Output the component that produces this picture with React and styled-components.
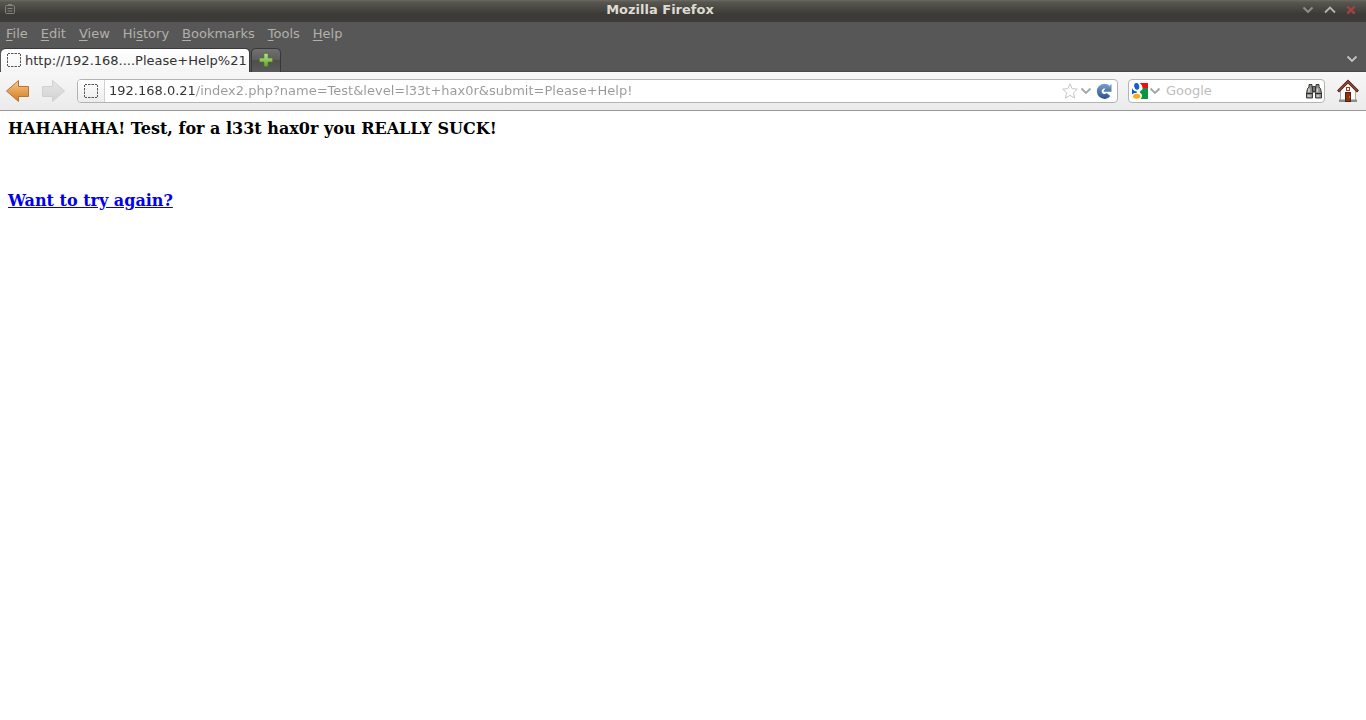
import React, { useState } from 'react';
import styled, { createGlobalStyle } from 'styled-components';

const menus = [
    { before: '', key: 'F', after: 'ile' },
    { before: '', key: 'E', after: 'dit' },
    { before: '', key: 'V', after: 'iew' },
    { before: 'Hi', key: 's', after: 'tory' },
    { before: '', key: 'B', after: 'ookmarks' },
    { before: '', key: 'T', after: 'ools' },
    { before: '', key: 'H', after: 'elp' },
];

const Chevron = ({ up }) => (
    <svg width='12' height='8' viewBox='0 0 12 8' fill='none' stroke='currentColor' strokeWidth='1.8'>
        <path d={up ? 'M1 6.5L6 1.5L11 6.5' : 'M1.5 1.5L6 6L10.5 1.5'} />
    </svg>
)

const WindowIcon = () => (
    <svg width='12' height='12' viewBox='0 0 12 12' fill='none' stroke='#85847d'>
        <rect x='1.5' y='1.5' width='9' height='8' rx='1' />
        <path d='M4 .5h4M3.5 4.5h5M3.5 7h5' />
    </svg>
)

const CloseIcon = () => (
    <svg width='10' height='10' viewBox='0 0 10 10' fill='none' stroke='#a04343' strokeWidth='2.4'>
        <path d='M1.3 1.3L8.7 8.7M8.7 1.3L1.3 8.7' />
    </svg>
)

const BlankPageIcon = () => (
    <svg width='14' height='14' viewBox='0 0 14 14' fill='none' stroke='#555'>
        <path d='M1 .5h2M4 .5h2.500M7.500 .5h2.500M11 .5h2M1 13.5h2M4 13.5h2.500M7.500 13.5h2.500M11 13.5h2' />
        <path d='M.5 1v2M.5 4v2.500M.5 7.500v2.500M.5 11v2M13.5 1v2M13.5 4v2.500M13.5 7.500v2.500M13.5 11v2' />
    </svg>
)

const PlusIcon = () => (
    <svg width='16' height='16' viewBox='0 0 16 16'>
        <defs>
            <linearGradient id='plus' x1='0' y1='0' x2='0' y2='1'>
                <stop offset='0' stopColor='#c0e38a' />
                <stop offset='1' stopColor='#5fa528' />
            </linearGradient>
        </defs>
        <path d='M6 1.5h4V6h4.5v4H10v4.5H6V10H1.5V6H6z' fill='url(#plus)' stroke='#4e7a35' strokeOpacity='.6' />
    </svg>
)

const ArrowIcon = ({ forward }) => (
    <svg width='24' height='24' viewBox='0 0 24 24'>
        <defs>
            <linearGradient id={forward ? 'next' : 'prev'} x1='0' y1='0' x2='0' y2='1'>
                <stop offset='0' stopColor={forward ? '#e6e6e6' : '#fbc98c'} />
                <stop offset='1' stopColor={forward ? '#d2d2d2' : '#d07a1c'} />
            </linearGradient>
        </defs>
        <path
            d={forward ? 'M10.5 1.5L22.5 12L10.5 22.5V17.5H.5V7.500H10.5z' : 'M12.5 1.5L.5 12L12.5 22.5V17.5H22.5V7.500H12.5z'}
            fill={forward ? 'url(#next)' : 'url(#prev)'}
            stroke={forward ? '#d0d0d0' : '#b4733a'}
            strokeLinejoin='round'
        />
    </svg>
)

const StarIcon = () => (
    <svg width='16' height='16' viewBox='0 0 16 16'>
        <path
            d='M8 .8L10.1 5.6L15.3 6.2L11.5 9.700L12.5 15L8 12.4L3.5 15L4.5 9.700L.7 6.2L5.9 5.6z'
            fill='#fff' stroke='#c4c4c4' strokeLinejoin='round'
        />
    </svg>
)

const ReloadIcon = () => (
    <svg width='16' height='16' viewBox='0 0 16 16'>
        <defs>
            <linearGradient id='reload' gradientUnits='userSpaceOnUse' x1='0' y1='0' x2='0' y2='16'>
                <stop offset='0' stopColor='#7aa3d0' />
                <stop offset='1' stopColor='#2a5488' />
            </linearGradient>
        </defs>
        <path d='M12 4.500A5.200 5.200 0 1 0 12.500 11.600' fill='none' stroke='url(#reload)' strokeWidth='4.800' />
        <path d='M15.5 1V8.800H7.800V7.500L10 5L13 3.600z' fill='url(#reload)' />
    </svg>
)

const GoogleIcon = () => (
    <svg width='16' height='16' viewBox='0 0 16 16'>
        <rect width='16' height='16' fill='#fff' />
        <path d='M7.500 0H16V5H10.500C10.500 3 9.5 1.200 7.500 0z' fill='#f20d0d' />
        <path d='M10.5 5H16V16H8.500C10.500 14 10.500 11.5 8.500 10C7.500 9.200 7.600 8.600 8.500 8C10 7.200 10.800 6.200 10.500 5z' fill='#0b9444' />
        <path d='M0 5C1 7.500 2.500 8.300 4.500 8.300L4.800 10.100C2.800 10.100 1.200 10.600 0 11.500z' fill='#1a55b8' />
        <ellipse cx='4.700' cy='3.300' rx='2.500' ry='3.400' transform='rotate(-12 4.700 3.300)' fill='#1461cc' />
        <ellipse cx='4.700' cy='13.300' rx='3.600' ry='2.500' fill='#f2b018' />
    </svg>
)

const BinocularsIcon = () => (
    <svg width='16' height='16' viewBox='0 0 16 16' stroke='#2c2c2c' strokeWidth='.9'>
        <path d='M3 1.5H6V4L7 5.500V10H6.500V15H.5V10L1.5 5.500L3 4z' fill='#8b8f87' />
        <path d='M10 1.500H13V4L14.500 5.500L15.500 10V15H9.500V10H9V5.500L10 4z' fill='#8b8f87' />
        <path d='M6.500 3.500h3v5h-3z' fill='#777' />
        <path d='M.5 10.500h6M9.500 10.500h6' strokeWidth='1.200' />
        <path d='M3 5.500v3.500M11.500 5.500v3.500M1.500 13h3M10.500 13h3' stroke='#d4d5ce' strokeWidth='1.500' />
    </svg>
)

const HomeIcon = () => (
    <svg width='22' height='24' viewBox='0 0 22 24'>
        <path d='M3.500 10.500L11 3.500L18.500 10.500V21.500H3.500z' fill='#fafafa' stroke='#aaa' />
        <path d='M2 20.500h18v2.500H2z' fill='#8b8f86' />
        <path d='M1 12.500L11 2.500L21 12.500' fill='none' stroke='#42231c' strokeWidth='3' />
        <path d='M1.500 12L11 2.800L20.500 12' fill='none' stroke='#a8482f' strokeWidth='1.100' />
        <rect x='9.5' y='8.5' width='3' height='3' fill='#fff' stroke='#9b3a18' />
        <rect x='8.5' y='13.5' width='5' height='9' fill='#93300c' stroke='#51200f' />
        <path d='M12 18h1' stroke='#edc26f' />
    </svg>
)

const App = () => {

    const [ url, setUrl ] = useState('192.168.0.21/index2.php?name=Test&level=l33t+hax0r&submit=Please+Help!');
    const [ search, setSearch ] = useState('');

    return (
        <>
            <GlobalStyle />
            <TitleBar>
                <TitleLeft><WindowIcon /></TitleLeft>
                <Title>Mozilla Firefox</Title>
                <TitleRight>
                    <IconButton $color='#92918c' aria-label='Minimize'><Chevron /></IconButton>
                    <IconButton $color='#b5b4af' aria-label='Maximize'><Chevron up /></IconButton>
                    <IconButton aria-label='Close'><CloseIcon /></IconButton>
                </TitleRight>
            </TitleBar>
            <MenuBar>
                {menus.map((menu) => (
                    <MenuButton key={menu.before + menu.key + menu.after}>
                        {menu.before}<u>{menu.key}</u>{menu.after}
                    </MenuButton>
                ))}
            </MenuBar>
            <TabBar>
                <Tab>
                    <BlankPageIcon />
                    <span>http://192.168....Please+Help%21</span>
                </Tab>
                <NewTab aria-label='Open a new tab'><PlusIcon /></NewTab>
                <TabsEnd>
                    <IconButton $color='#c4c4c4' aria-label='List all tabs'><Chevron /></IconButton>
                </TabsEnd>
            </TabBar>
            <ToolBar>
                <NavButtons>
                    <IconButton aria-label='Back'><ArrowIcon /></IconButton>
                    <IconButton aria-label='Forward'><ArrowIcon forward /></IconButton>
                </NavButtons>
                <UrlBox>
                    <Identity><BlankPageIcon /></Identity>
                    <UrlInput aria-label='Address' value={url} onChange={(e) => setUrl(e.target.value)} />
                    <UrlActions>
                        <IconButton aria-label='Bookmark this page'><StarIcon /></IconButton>
                        <IconButton $color='#a5a5a5' aria-label='Show history'><Chevron /></IconButton>
                        <ReloadButton aria-label='Reload'><ReloadIcon /></ReloadButton>
                    </UrlActions>
                </UrlBox>
                <SearchBox>
                    <EngineButton aria-label='Search engine'><GoogleIcon /><Chevron /></EngineButton>
                    <SearchInput
                        aria-label='Search'
                        placeholder='Google'
                        value={search}
                        onChange={(e) => setSearch(e.target.value)}
                    />
                    <IconButton aria-label='Search'><BinocularsIcon /></IconButton>
                </SearchBox>
                <HomeButton aria-label='Home'><HomeIcon /></HomeButton>
            </ToolBar>
            <Page>
                <Message>HAHAHAHA! Test, for a l33t hax0r you REALLY SUCK!</Message>
                <Again href='#again'>Want to try again?</Again>
            </Page>
        </>
    )
}

export default App;


const GlobalStyle = createGlobalStyle`
    * {
        box-sizing:border-box;
    }
    body {
        margin:0;
        background:#fff;
        font-family:'DejaVu Sans', sans-serif;
        font-size:13px;
    }
    button, input {
        margin:0;
        padding:0;
        border:0;
        background:none;
        font:inherit;
        outline:none;
    }
    svg {
        display:block;
        flex:none;
    }
`

const TitleBar = styled.header`
    height:22px;
    display:flex;
    align-items:center;
    background:linear-gradient(#6b6a64 0, #57564f 2px, #3c3b37 14px, #3c3b37);
`

const TitleLeft = styled.div`
    width:20px;
    padding:0 0 2px 4px;
`

const Title = styled.h1`
    flex:1;
    margin:0;
    padding-bottom:2px;
    text-align:center;
    font-size:13px;
    line-height:20px;
    color:#dfdbd2;
`

const TitleRight = styled.div`
    width:66px;
    display:flex;
    align-items:center;
    gap:10px;
    padding:0 0 2px 2px;
`

const IconButton = styled.button`
    display:flex;
    align-items:center;
    color:${props => props.$color || '#333'};
`

const MenuBar = styled.nav`
    height:24px;
    display:flex;
    align-items:center;
    gap:13px;
    padding:0 6px;
    background:#575757;
`

const MenuButton = styled.button`
    color:#b3b0aa;
    line-height:20px;

    u {
        text-underline-offset:2px;
    }
`

const TabBar = styled.div`
    height:26px;
    display:flex;
    align-items:flex-end;
    gap:1px;
    padding-left:1px;
    background:linear-gradient(#575757 24px, #454545);
`

const Tab = styled.div`
    height:24px;
    width:249px;
    display:flex;
    align-items:center;
    gap:4px;
    padding:0 0 1px 6px;
    border:1px solid #3a3a3a;
    border-width:1px 1px 0 0;
    border-radius:5px 5px 0 0;
    background:linear-gradient(#fff, #f5f5f5);
    color:#333;
    white-space:nowrap;
`

const NewTab = styled.button`
    width:30px;
    height:24px;
    display:flex;
    align-items:center;
    justify-content:center;
    padding-bottom:2px;
    border:1px solid #383838;
    border-bottom:0;
    border-radius:5px 5px 0 0;
    background:linear-gradient(#707070, #5c5c5c 50%, #4f4f4f 50%, #5a5a5a);
`

const TabsEnd = styled.div`
    flex:1;
    display:flex;
    justify-content:flex-end;
    padding:0 8px 9px 0;
`

const ToolBar = styled.div`
    height:39px;
    display:flex;
    align-items:center;
    gap:10px;
    padding:0 7px 1px 6px;
    border-bottom:1px solid #979797;
    background:linear-gradient(#f7f7f7, #ebebeb);
`

const NavButtons = styled.div`
    display:flex;
    gap:12px;
    padding-right:1px;
`

const UrlBox = styled.div`
    flex:1;
    height:24px;
    display:flex;
    align-items:stretch;
    border:1px solid #b3b3b3;
    border-radius:4px;
    background:#fff;
    overflow:hidden;
`

const Identity = styled.div`
    width:27px;
    display:flex;
    align-items:center;
    justify-content:center;
    border-right:1px solid #d0d0d0;
    background:linear-gradient(#fff, #ececec);
`

// the host part of the address is dark, the rest is grey
const UrlInput = styled.input`
    flex:1;
    min-width:0;
    padding-left:4px;
    background:linear-gradient(90deg, #333 91px, #999 91px);
    background-clip:text;
    -webkit-background-clip:text;
    color:transparent;
    caret-color:#333;
`

const UrlActions = styled.div`
    display:flex;
    align-items:center;
    gap:2px;
    padding-right:5px;
`

const ReloadButton = styled(IconButton)`
    padding-left:2px;
`

const HomeButton = styled(IconButton)`
    padding-left:2px;
`

const SearchBox = styled.div`
    width:197px;
    height:24px;
    display:flex;
    align-items:center;
    padding:0 2px 0 3px;
    border:1px solid #b3b3b3;
    border-radius:4px;
    background:#fff;
`

const EngineButton = styled.button`
    display:flex;
    align-items:center;
    gap:1px;
    color:#a5a5a5;
`

const SearchInput = styled.input`
    flex:1;
    min-width:0;
    padding-left:5px;
    color:#333;

    &::placeholder {
        color:#bdbdbd;
        opacity:1;
    }
`

const Page = styled.main`
    display:flex;
    flex-direction:column;
    align-items:flex-start;
    gap:52px;
    padding:8px;
    font-family:'DejaVu Serif', serif;
    font-size:16px;
    font-weight:bold;
    line-height:20px;
`

const Message = styled.p`
    margin:0;
    color:#000;
`

const Again = styled.a`
    color:#0000ee;
`
